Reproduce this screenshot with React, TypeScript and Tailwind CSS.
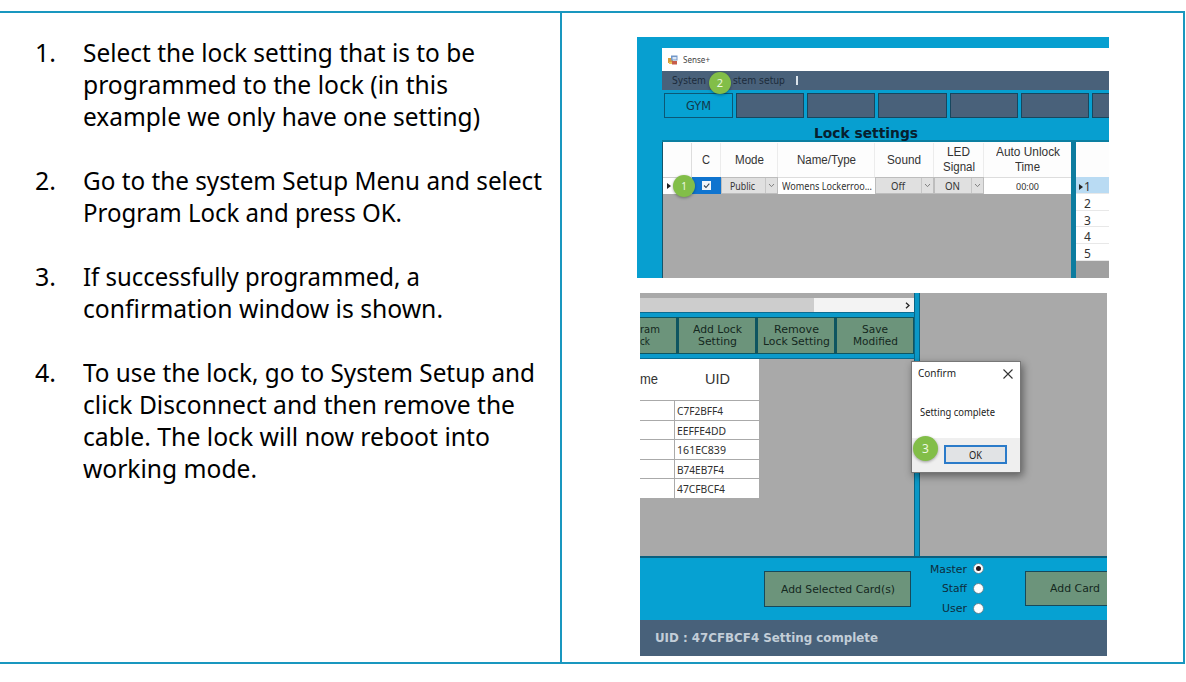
import { useLayoutEffect, useRef } from 'react';
import type { ReactNode } from 'react';
import { clsx } from 'clsx';

const sans = "font-['Noto_Sans','Open_Sans',sans-serif]";
const verdana = "font-['DejaVu_Sans',sans-serif]";
const arial = "font-['Liberation_Sans',sans-serif]";

/** A single line of text condensed or widened to the width of its box. */
function Fit({ className, children }: { className: string; children: ReactNode }) {
  const outer = useRef<HTMLSpanElement>(null);
  const inner = useRef<HTMLSpanElement>(null);
  useLayoutEffect(() => {
    const o = outer.current;
    const i = inner.current;
    if (!o || !i) return;
    i.style.transform = 'none';
    const natural = i.getBoundingClientRect().width;
    i.style.transform = `scaleX(${o.getBoundingClientRect().width / natural})`;
  }, []);
  return (
    <span ref={outer} className={clsx('block shrink-0 whitespace-nowrap', className)}>
      <span ref={inner} className="inline-block origin-left">
        {children}
      </span>
    </span>
  );
}

const steps = [
  [
    { text: 'Select the lock setting that is to be', w: 'w-[392px]' },
    { text: 'programmed to the lock (in this', w: 'w-[365px]' },
    { text: 'example we only have one setting)', w: 'w-[397px]' },
  ],
  [
    { text: 'Go to the system Setup Menu and select', w: 'w-[459px]' },
    { text: 'Program Lock and press OK.', w: 'w-[319px]' },
  ],
  [
    { text: 'If successfully programmed, a', w: 'w-[337px]' },
    { text: 'confirmation window is shown.', w: 'w-[360px]' },
  ],
  [
    { text: 'To use the lock, go to System Setup and', w: 'w-[452px]' },
    { text: 'click Disconnect and then remove the', w: 'w-[432px]' },
    { text: 'cable. The lock will now reboot into', w: 'w-[407px]' },
    { text: 'working mode.', w: 'w-[174px]' },
  ],
];

function Badge({ n, className }: { n: number; className: string }) {
  return (
    <span
      className={clsx(
        'absolute z-10 flex items-center justify-center rounded-full bg-[#82be48] text-[#eef8e2] shadow-[0_1px_3px_rgba(0,0,0,0.35)]',
        sans,
        className,
      )}
    >
      {n}
    </span>
  );
}

function Chevron() {
  return (
    <svg viewBox="0 0 8 6" className="h-[5px] w-[7px]" fill="none" stroke="#777" strokeWidth="1.1">
      <path d="M1 1.2 4 4.4 7 1.2" />
    </svg>
  );
}

function Dropdown({ w, tw, label }: { w: string; tw: string; label: string }) {
  return (
    <div className={clsx('flex h-[17px] border border-[#bdbdbd] bg-[#e0e0e0] text-[10px] leading-[17px]', w)}>
      <div className="flex flex-1 justify-center pr-[2px]">
        <Fit className={tw}>{label}</Fit>
      </div>
      <div className="flex w-[12px] items-center justify-center border-l border-[#c6c6c6]">
        <Chevron />
      </div>
    </div>
  );
}

function SettingsWindow() {
  return (
    <div className="relative h-[241px] w-[472px] overflow-hidden bg-[#079fd0] pt-[11px] pl-[25px]">
      <div className="flex h-[230px] w-[447px] flex-col">
        <div className={clsx('flex h-[23px] items-center bg-white pl-[6px] text-[#444]', sans)}>
          <svg viewBox="0 0 10 10" className="h-[10px] w-[10px]">
            <rect x="0" y="3" width="5" height="5" fill="#d79a3c" />
            <rect x="3" y="0.5" width="6.5" height="5" fill="#7297c8" />
            <rect x="4.5" y="2" width="4" height="2.5" fill="#dbe7f5" />
            <rect x="4" y="6" width="5" height="3.5" fill="#c65c4a" />
            <rect x="1" y="7" width="3" height="2" fill="#e6c35a" />
          </svg>
          <Fit className="ml-[5px] w-[27px] text-[9px]">Sense+</Fit>
        </div>
        <div className={clsx('relative flex h-[19px] items-center bg-[#49617a] pl-[10px] text-[10px] text-[#1c2b3a]', verdana)}>
          <Fit className="w-[34px]">System</Fit>
          <Fit className="ml-[27px] w-[52px]">stem setup</Fit>
          <span className="ml-[11px] h-[9px] w-[1.5px] bg-[#dbe3ea]" />
          <Badge n={2} className="top-[1px] left-[47px] h-[22px] w-[22px] text-[11px]" />
        </div>
        <div className="flex h-[29px] gap-[3px] overflow-hidden pt-[3px] pl-[2px]">
          <div className={clsx('flex h-[25px] w-[68.5px] shrink-0 items-center justify-center border-[1.5px] border-[#0b5876] bg-[#06a2d3] pt-[2px] text-[11.5px] text-[#12384b]', verdana)}>
            <Fit className="w-[25px]">GYM</Fit>
          </div>
          {[0, 1, 2, 3, 4, 5].map((i) => (
            <div key={i} className="h-[25px] w-[68.4px] shrink-0 border-[1.5px] border-[#16475f] bg-[#49617a]" />
          ))}
        </div>
        <div className={clsx('flex h-[21px] items-center pl-[152px] text-[14px] font-bold text-[#06202f]', verdana)}>
          <Fit className="mt-[7px] w-[104px]">Lock settings</Fit>
        </div>
        <div className="flex h-[138px] border-t-2 border-[#0b7fa1]">
          <div className="w-[409px] border-l border-[#14556b] bg-[#a9a9a9]">
            <div className={clsx('flex h-[35px] bg-[#fdfdfd] pt-px text-[12px] leading-[15px] text-[#333]', arial)}>
              <div className="w-[29px] border-r border-[#ddd]" />
              <div className="flex w-[29px] items-center justify-center border-r border-[#ececec]">
                <Fit className="w-[8px]">C</Fit>
              </div>
              <div className="flex w-[57px] items-center justify-center border-r border-[#ececec]">
                <Fit className="w-[29px]">Mode</Fit>
              </div>
              <div className="flex w-[97px] items-center justify-center border-r border-[#ececec]">
                <Fit className="w-[59px]">Name/Type</Fit>
              </div>
              <div className="flex w-[59px] items-center justify-center border-r border-[#ececec]">
                <Fit className="w-[34px]">Sound</Fit>
              </div>
              <div className="flex w-[50px] flex-col items-center justify-center border-r border-[#ececec]">
                <Fit className="w-[23px]">LED</Fit>
                <Fit className="w-[32px]">Signal</Fit>
              </div>
              <div className="flex flex-1 flex-col items-center justify-center">
                <Fit className="w-[64px]">Auto Unlock</Fit>
                <Fit className="w-[25px]">Time</Fit>
              </div>
            </div>
            <div className={clsx('relative flex h-[17px] bg-white text-[#333]', sans)}>
              <div className="flex w-[29px] items-center border-t border-[#ccc] pl-[4px]">
                <svg viewBox="0 0 4 6" className="h-[6px] w-[4px]" fill="#222">
                  <path d="M0 0 4 3 0 6Z" />
                </svg>
              </div>
              <div className="flex w-[29px] items-center justify-center bg-[#0f74cf]">
                <svg viewBox="0 0 9 9" className="h-[9px] w-[9px]">
                  <rect width="9" height="9" fill="#f2f6fa" />
                  <path d="M2 4.5 4 6.5 7.3 2.6" fill="none" stroke="#345" strokeWidth="1.1" />
                </svg>
              </div>
              <Dropdown w="w-[57px]" tw="w-[25px]" label="Public" />
              <div className="flex w-[97px] border-t border-[#ddd] pl-[4px] text-[10px] leading-[17px]">
                <Fit className="w-[90px]">Womens Lockerroo...</Fit>
              </div>
              <Dropdown w="w-[59px]" tw="w-[14px]" label="Off" />
              <Dropdown w="w-[50px]" tw="w-[15px]" label="ON" />
              <div className="flex flex-1 justify-center border-t border-[#ddd] text-[9.5px] leading-[17px]">
                <Fit className="w-[23px]">00:00</Fit>
              </div>
              <Badge n={1} className="-top-[2px] left-[10px] h-[22px] w-[22px] text-[10px]" />
            </div>
          </div>
          <div className="w-[5px] bg-[#0d7c9f]" />
          <div className="flex-1 bg-[#a0a0a0]">
            <div className="h-[35px] bg-[#fdfdfd]" />
            {[1, 2, 3, 4, 5].map((n) => (
              <div
                key={n}
                className={clsx(
                  'flex h-[16.8px] items-center border-b border-[#e8e8e8] pt-[4px] text-[12px] leading-none text-[#333]',
                  sans,
                  n === 1 ? 'bg-[#b9dbf3] pl-[3px]' : 'bg-white pl-[8px]',
                )}
              >
                {n === 1 && (
                  <svg viewBox="0 0 4 6" className="mr-[1px] h-[6px] w-[4px]" fill="#222">
                    <path d="M0 0 4 3 0 6Z" />
                  </svg>
                )}
                {n}
              </div>
            ))}
          </div>
        </div>
      </div>
    </div>
  );
}

const greenButton = 'flex flex-col items-center justify-center bg-[#6c947b] pt-[2px] text-[#14281e]';

function Radio({ label, w, checked }: { label: string; w: string; checked?: boolean }) {
  return (
    <div className="flex h-[19.7px] items-center justify-end gap-[6px]">
      <Fit className={clsx('pt-[2px]', w)}>{label}</Fit>
      <span className="flex h-[11px] w-[11px] items-center justify-center rounded-full border border-[#5c8595] bg-white">
        {checked && <span className="h-[5px] w-[5px] rounded-full bg-[#2b1518]" />}
      </span>
    </div>
  );
}

function ConfirmDialog() {
  return (
    <div className={clsx('absolute top-[68px] left-[271px] flex h-[112px] w-[110px] flex-col border border-[#777] bg-white text-[#222] shadow-[2px_3px_8px_rgba(0,0,0,0.45)]', sans)}>
      <div className="flex h-[23px] items-center justify-between pr-[7px] pl-[6px] text-[10.5px]">
        <Fit className="w-[38px]">Confirm</Fit>
        <svg viewBox="0 0 10 10" className="h-[10px] w-[10px]" stroke="#333" strokeWidth="1.1">
          <path d="M0.5 0.5 9.5 9.5M9.5 0.5 0.5 9.5" />
        </svg>
      </div>
      <div className="flex h-[53px] items-center pt-[2px] pl-[8px] text-[10px]">
        <Fit className="w-[75px]">Setting complete</Fit>
      </div>
      <div className="flex flex-1 bg-[#efefef] pt-[7px] pl-[32px]">
        <div className="flex h-[19px] w-[63px] items-center justify-center border-2 border-[#2b7bc9] bg-[#e1e3e5] pt-px text-[10px]">
          <Fit className="w-[13px]">OK</Fit>
        </div>
      </div>
      <Badge n={3} className="top-[74px] left-[1px] h-[25px] w-[25px] text-[12px]" />
    </div>
  );
}

function CardsWindow() {
  return (
    <div className="relative flex h-[363px] w-[467px] flex-col overflow-hidden bg-[#06a1d2]">
      <div className="flex h-[265px] border-b-2 border-[#0b5f7e]">
        <div className="flex w-[274px] flex-col bg-[#a9a9a9]">
          <div className="mt-[5px] flex h-[14px] bg-[#f3f3f3]">
            <div className="w-[174px] bg-[#cdcdcd]" />
            <div className="flex flex-1 items-center justify-end pr-[4px]">
              <svg viewBox="0 0 5 7" className="h-[7px] w-[5px]" fill="none" stroke="#222" strokeWidth="1.3">
                <path d="M1 0.8 4 3.5 1 6.2" />
              </svg>
            </div>
          </div>
          <div className="h-[47px] border-y-[1.5px] border-[#0b6c91] bg-[#0b9aca] py-[3.5px]">
            <div className={clsx('flex h-[37px] gap-[3px] border-y-[1.5px] border-[#0f5560] bg-[#0f5560] text-[11px] leading-[12px]', verdana)}>
              <div className={clsx(greenButton, 'w-[36px]')}>
                <div className="flex w-full flex-col items-start">
                  <Fit className="w-[20px]">ram</Fit>
                  <Fit className="w-[10px]">ck</Fit>
                </div>
              </div>
              <div className={clsx(greenButton, 'w-[76px]')}>
                <Fit className="w-[49px]">Add Lock</Fit>
                <Fit className="w-[39px]">Setting</Fit>
              </div>
              <div className={clsx(greenButton, 'w-[76px]')}>
                <Fit className="w-[45px]">Remove</Fit>
                <Fit className="w-[67px]">Lock Setting</Fit>
              </div>
              <div className={clsx(greenButton, 'w-[76px]')}>
                <Fit className="w-[26px]">Save</Fit>
                <Fit className="w-[45px]">Modified</Fit>
              </div>
            </div>
          </div>
          <div className="w-[119px] bg-white">
            <div className={clsx('flex h-[41px] items-center text-[14px] text-[#333]', arial)}>
              <Fit className="w-[18px]">me</Fit>
              <div className="flex flex-1 justify-center pl-[18px]">
                <Fit className="w-[25px]">UID</Fit>
              </div>
            </div>
            {[
              ['C7F2BFF4', 'w-[46px]'],
              ['EEFFE4DD', 'w-[49px]'],
              ['161EC839', 'w-[49px]'],
              ['B74EB7F4', 'w-[47px]'],
              ['47CFBCF4', 'w-[48px]'],
            ].map(([id, w]) => (
              <div key={id} className={clsx('flex h-[19.5px] border-t border-[#aaa] text-[10.5px] leading-[20px] text-[#2e2e2e]', sans)}>
                <div className="w-[35px] border-r border-[#aaa]" />
                <Fit className={clsx('ml-[2px]', w)}>{id}</Fit>
              </div>
            ))}
          </div>
        </div>
        <div className="w-[5.5px] border-x-[1.5px] border-[#0b6585] bg-[#0b98c6]" />
        <div className="flex-1 bg-[#a9a9a9]" />
      </div>
      <div className={clsx('flex h-[62px] text-[11px] text-[#0e2d3d]', verdana)}>
        <div className={clsx(greenButton, 'mt-[13px] ml-[124px] h-[36px] w-[147px] border-[1.5px] border-[#17495a]')}>
          <Fit className="w-[114px]">Add Selected Card(s)</Fit>
        </div>
        <div className="ml-[10px] w-[63px] pt-[1px]">
          <Radio label="Master" w="w-[37px]" checked />
          <Radio label="Staff" w="w-[25px]" />
          <Radio label="User" w="w-[25px]" />
        </div>
        <div className={clsx(greenButton, 'mt-[13px] ml-[41px] h-[35px] flex-1 border-[1.5px] border-r-0 border-[#17495a]')}>
          <Fit className="ml-[17px] w-[50px]">Add Card</Fit>
        </div>
      </div>
      <div className={clsx('flex flex-1 items-center bg-[#48617a] pl-[15px] text-[12px] font-bold text-[#c3ced8]', verdana)}>
        <Fit className="w-[223px]">UID : 47CFBCF4 Setting complete</Fit>
      </div>
      <ConfirmDialog />
    </div>
  );
}

export default function App() {
  return (
    <div className="h-[682px] w-[1186px] overflow-hidden bg-white pt-[11px]">
      <div className="flex h-[653px] w-[1185px] border-y-2 border-r-2 border-[#1997bf]">
        <ol className={clsx('flex w-[562px] shrink-0 flex-col gap-8 border-r-2 border-[#1997bf] pt-[23px] text-[26px] leading-8 text-black', sans)}>
          {steps.map((lines, i) => (
            <li key={i} className="flex pl-[35px]">
              <div className="w-[48px]">
                <Fit className="w-[21px]">{i + 1}.</Fit>
              </div>
              <div>
                {lines.map((line) => (
                  <Fit key={line.text} className={line.w}>
                    {line.text}
                  </Fit>
                ))}
              </div>
            </li>
          ))}
        </ol>
        <div className="flex flex-col gap-[15px] pt-[24px] pl-[75px]">
          <SettingsWindow />
          <div className="pl-[3px]">
            <CardsWindow />
          </div>
        </div>
      </div>
    </div>
  );
}
